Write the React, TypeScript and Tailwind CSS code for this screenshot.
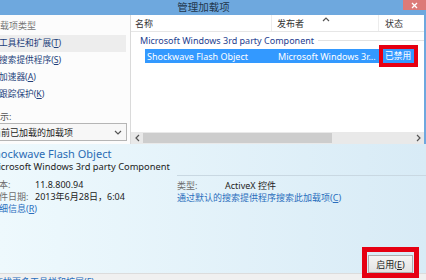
import React from "react";

function Key({ k }: { k: string }) {
  return (
    <>
      (<span className="underline">{k}</span>)
    </>
  );
}

function Chevron({ dir }: { dir: "left" | "right" | "down" | "up" }) {
  const pts = {
    left: "5,1 2,4 5,7",
    right: "3,1 6,4 3,7",
    down: "1,3 4,6 7,3",
    up: "1,5 4,2 7,5",
  }[dir];
  return (
    <svg width="8" height="8" viewBox="0 0 8 8" className="shrink-0">
      <polyline points={pts} fill="none" stroke="#555" strokeWidth="1.2" />
    </svg>
  );
}

function TitleBar() {
  return (
    <div className="h-[15px] shrink-0 flex bg-[#6ea8de]">
      <div className="flex-1 flex justify-center pt-[1px] pl-[4px] text-[10.5px] leading-[12px] text-[#22364c]">
        管理加载项
      </div>
      <div className="w-[23px] h-[10px] bg-[#dc7a78] flex items-center justify-center">
        <svg width="7" height="7" viewBox="0 0 7 7">
          <path d="M1 1L6 6M6 1L1 6" stroke="#fff" strokeWidth="1.3" />
        </svg>
      </div>
    </div>
  );
}

const types = [
  { label: "工具栏和扩展", k: "T", active: true },
  { label: "搜索提供程序", k: "S" },
  { label: "加速器", k: "A" },
  { label: "跟踪保护", k: "K" },
];

function Sidebar() {
  return (
    <div className="w-[131px] shrink-0 border-r border-[#dadada] bg-[#fcfcfc] overflow-hidden">
      <p className="pt-[6px] -ml-[9px] leading-[10px] text-[#777] whitespace-nowrap">加载项类型</p>
      <div className="mt-[4px]">
        {types.map((t) => (
          <div
            key={t.k}
            className={`h-[17px] w-[126px] flex items-center text-[#22407a] ${
              t.active ? "bg-[#ededed]" : ""
            }`}
          >
            <span className="-ml-[1px] text-[8.7px] whitespace-nowrap">
              {t.label}
              <Key k={t.k} />
            </span>
          </div>
        ))}
      </div>
      <p className="mt-[9px] -ml-[9px] leading-[10px] text-[#555] whitespace-nowrap">显示:</p>
      <div className="mt-[1px] -ml-[12px] w-[139px] h-[18px] border border-[#b5b5b5] bg-[#f7f7f7] flex items-center pr-[4px]">
        <span className="flex-1 pl-[3px] text-[#222] whitespace-nowrap">当前已加载的加载项</span>
        <Chevron dir="down" />
      </div>
    </div>
  );
}

function AddonList() {
  return (
    <div className="flex-1 flex flex-col border-r-2 border-[#6ea8de]">
      <div className="h-[17px] shrink-0 flex items-center border-b border-[#e6e6e6] text-[#333]">
        <div className="w-[141px] h-full flex items-center pl-[4px] border-r border-[#ececec]">名称</div>
        <div className="w-[107px] h-full flex items-center pl-[5px] border-r border-[#ececec] relative">
          发布者
          <span className="absolute left-[50px] top-[1px]">
            <Chevron dir="up" />
          </span>
        </div>
        <div className="flex-1 pl-[6px]">状态</div>
      </div>

      <div className="flex-1">
        <div className="pt-[3px] pl-[9px] flex items-center text-[9px] leading-[11px] text-[#1d3d8f] whitespace-nowrap">
          Microsoft Windows 3rd party Component
          <div className="flex-1 h-px bg-[#e2e2e2] ml-[4px]" />
        </div>
        <div className="mt-[3px] ml-[14px] h-[14px] flex items-center text-white text-[9px] whitespace-nowrap">
          <div className="w-[127px] h-full bg-[#3399ff] flex items-center pl-[2px]">Shockwave Flash Object</div>
          <div className="w-[107px] h-full bg-[#3399ff] flex items-center pl-[6px] overflow-hidden">
            Microsoft Windows 3r...
          </div>
          <div className="w-[39px] h-[22px] -my-[4px] border-4 border-[#e60012] bg-[#3399ff] flex items-center pl-[2px] text-[8.7px]">
            已禁用
          </div>
        </div>
      </div>

      <div className="h-[12px] shrink-0 flex items-center bg-[#e9e9e9]">
        <span className="pl-[3px] pr-[1px]">
          <Chevron dir="left" />
        </span>
        <div className="w-[189px] h-[10px] bg-[#cdcdcd]" />
        <div className="flex-1" />
        <span className="pr-[2px]">
          <Chevron dir="right" />
        </span>
      </div>
    </div>
  );
}

function Details() {
  return (
    <div className="h-[129px] shrink-0 flex flex-col bg-gradient-to-r from-[#eef9fd] to-[#d8ebf6]">
      <div className="-ml-[12px] pt-[3px] text-[11px] leading-[14px] text-[#2b6cb4] whitespace-nowrap">
        Shockwave Flash Object
      </div>
      <div className="-ml-[10px] text-[9.3px] leading-[12px] text-[#222] whitespace-nowrap">
        Microsoft Windows 3rd party Component
      </div>

      <div className="mt-[2px] flex">
        <div className="w-[177px] pt-[3px] -ml-[10px] shrink-0">
          <div className="h-[12px] flex items-center whitespace-nowrap">
            <span className="w-[45px] text-[#6d6d6d]">版本:</span>
            <span className="text-[#222]">11.8.800.94</span>
          </div>
          <div className="h-[12px] flex items-center whitespace-nowrap">
            <span className="w-[45px] text-[#6d6d6d]">文件日期:</span>
            <span className="text-[#222]">2013年6月28日，6:04</span>
          </div>
          <div className="h-[12px] flex items-center text-[#2a6ebd] whitespace-nowrap">
            详细信息
            <Key k="R" />
          </div>
        </div>
        <div className="flex-1 ml-[10px] border-t border-[#c9d8e2] pt-[3px]">
          <div className="h-[12px] flex items-center">
            <span className="w-[48px] text-[#6d6d6d]">类型:</span>
            <span className="text-[#222]">ActiveX 控件</span>
          </div>
          <div className="h-[12px] flex items-center text-[#2a6ebd] whitespace-nowrap">
            通过默认的搜索提供程序搜索此加载项
            <Key k="C" />
          </div>
        </div>
      </div>

      <div className="flex-1" />
      <div className="flex justify-end pr-[7px]">
        <div className="relative z-10 -mb-[5px] border-[5px] border-[#e60012] pt-[3px] px-[1px]">
          <button className="w-[45px] h-[18px] border border-[#adadad] bg-gradient-to-b from-[#f4f4f4] to-[#e3e3e3] text-[9px] text-[#222] flex items-center justify-center">
            <span>
              启用
              <Key k="E" />
            </span>
          </button>
        </div>
      </div>
    </div>
  );
}

function Footer() {
  return (
    <div className="h-[7px] shrink-0 overflow-hidden bg-[#f0f0f0] border-t border-[#dcdcdc] pt-[3px] -ml-[6px] text-[#2a6ebd] leading-[10px] whitespace-nowrap">
      查找更多工具栏和扩展(F)...
    </div>
  );
}

export default function App() {
  return (
    <div className="w-[426px] h-[280px] overflow-hidden flex flex-col bg-white text-[9px] leading-none text-[#1e1e1e] font-['Noto_Sans','Noto_Sans_CJK_SC',sans-serif]">
      <TitleBar />
      <div className="flex h-[129px] shrink-0">
        <Sidebar />
        <AddonList />
      </div>
      <Details />
      <Footer />
    </div>
  );
}
